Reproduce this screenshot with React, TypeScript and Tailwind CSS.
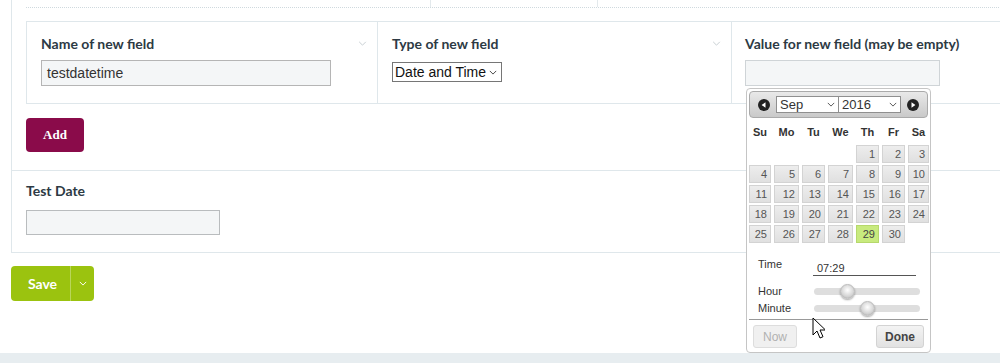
import React from 'react';

const weeks: (number | null)[][] = [
  [null, null, null, null, 1, 2, 3],
  [4, 5, 6, 7, 8, 9, 10],
  [11, 12, 13, 14, 15, 16, 17],
  [18, 19, 20, 21, 22, 23, 24],
  [25, 26, 27, 28, 29, 30, null],
];

const dayNames = ['Su', 'Mo', 'Tu', 'We', 'Th', 'Fr', 'Sa'];

const Chevron = ({ className }: { className?: string }) => (
  <svg viewBox="0 0 10 6" className={className} fill="none" stroke="currentColor" strokeWidth="1.2">
    <path d="M1 1l4 4 4-4" />
  </svg>
);

const NavIcon = ({ dir }: { dir: 'prev' | 'next' }) => (
  <svg viewBox="0 0 12 12" className="w-[12px] h-[12px]">
    <circle cx="6" cy="6" r="6" fill="#222" />
    {dir === 'prev' ? <path d="M7.5 3.2v5.6L3.6 6z" fill="#fff" /> : <path d="M4.5 3.2v5.6L8.4 6z" fill="#fff" />}
  </svg>
);

const Handle = () => (
  <div className="w-[15px] h-[15px] rounded-full border border-[#bbb] bg-[radial-gradient(circle_at_50%_40%,#ffffff,#d5d5d5_60%,#a9a9a9)] shadow-[0_1px_2px_rgba(0,0,0,0.35)]" />
);

const DatePicker = () => (
  <div className="absolute left-[746px] top-[88px] w-[185px] h-[265px] bg-white border border-[#c5c5c5] rounded-[4px] p-[1px] font-['Liberation_Sans',Arial,sans-serif] text-[#333]">
    {/* header */}
    <div className="h-[27px] mx-[1px] mt-[1px] rounded-[4px] border border-[#aaa] bg-[linear-gradient(#e9e9e9,#c9c9c9)] flex items-center px-[8px]">
      <NavIcon dir="prev" />
      <div className="ml-[6px] flex">
        <div className="w-[63px] h-[17px] bg-white border border-[#8f8f8f] flex items-center justify-between pl-[3px] pr-[3px] text-[13px] leading-none">
          <span>Sep</span>
          <Chevron className="w-[8px] h-[5px] text-[#555]" />
        </div>
        <div className="w-[62px] h-[17px] bg-white border border-[#8f8f8f] border-l-0 flex items-center justify-between pl-[3px] pr-[3px] text-[13px] leading-none">
          <span>2016</span>
          <Chevron className="w-[8px] h-[5px] text-[#555]" />
        </div>
      </div>
      <div className="ml-auto">
        <NavIcon dir="next" />
      </div>
    </div>

    {/* day names */}
    <div className="grid grid-cols-[22px_25px_23px_25px_23px_23px_21px] gap-x-[3px] px-[1px] mt-[6px] h-[16px] items-center">
      {dayNames.map((d) => (
        <div key={d} className="text-center text-[11px] font-bold">{d}</div>
      ))}
    </div>

    {/* days */}
    <div className="grid grid-cols-[22px_25px_23px_25px_23px_23px_21px] gap-x-[3px] gap-y-[2px] px-[1px] mt-[5px]">
      {weeks.flat().map((d, i) =>
        d === null ? (
          <div key={i} className="h-[18px]" />
        ) : (
          <div
            key={i}
            className={
              d === 29
                ? 'h-[18px] border border-[#b6d86c] bg-[#c8ea7e] text-right pr-[3px] text-[11px] leading-[16px] text-[#444]'
                : 'h-[18px] border border-[#d3d3d3] bg-[linear-gradient(#ededed,#e0e0e0)] text-right pr-[3px] text-[11px] leading-[16px] text-[#555]'
            }
          >
            {d}
          </div>
        )
      )}
    </div>

    {/* time */}
    <div className="mt-[14px] pl-[10px] text-[11px]">
      <div className="flex items-start h-[26px]">
        <span className="w-[55px] leading-[14px]">Time</span>
        <span className="w-[103px] border-b border-[#555] pl-[4px] leading-[18px] h-[19px] pt-[2px]">07:29</span>
      </div>
      <div className="flex items-center h-[17px]">
        <span className="w-[56px]">Hour</span>
        <div className="relative w-[106px] h-[7px] rounded-full bg-[#dedede]">
          <div className="absolute left-[26px] top-[-4px]"><Handle /></div>
        </div>
      </div>
      <div className="flex items-center h-[17px]">
        <span className="w-[56px]">Minute</span>
        <div className="relative w-[106px] h-[7px] rounded-full bg-[#dedede]">
          <div className="absolute left-[46px] top-[-4px]"><Handle /></div>
        </div>
      </div>
    </div>
    <div className="mt-[2px] mx-[1px] border-t border-[#999]" />
    <div className="flex justify-between px-[5px] mt-[5px]">
      <div className="w-[44px] h-[23px] rounded-[3px] border border-[#ddd] bg-[#f0f0f0] text-[#b0b0b0] text-[12px] flex items-center justify-center">Now</div>
      <div className="w-[48px] h-[23px] rounded-[3px] border border-[#d3d3d3] bg-[linear-gradient(#f3f3f3,#e2e2e2)] text-[#444] text-[12px] font-bold flex items-center justify-center">Done</div>
    </div>
  </div>
);

const Cursor = () => (
  <svg className="absolute left-[812px] top-[317px] w-[13px] h-[22px]" viewBox="0 0 13 22">
    <path d="M1 1v17l4-4 3 7 3-1.3-3-6.7h5.5z" fill="#fff" stroke="#000" strokeWidth="1" strokeLinejoin="round" />
  </svg>
);

export default function App() {
  const label = "font-['Lato','Open_Sans',sans-serif] font-bold text-[14px] text-[#2d3a44]";
  return (
    <div className="relative w-[1000px] h-[363px] overflow-hidden bg-white">
      <div className="ml-[11px] w-[1100px] border-l border-b border-[#dfe7eb]">
        <div className="px-[14px] pb-[18px] border-b border-[#dfe7eb]">
          {/* top remnant */}
          <div className="h-[8px] border-b border-dotted border-[#cfd9de] flex">
            <div className="w-[405px] border-r border-[#e3e9ec]" />
            <div className="w-[167px] border-r border-[#e3e9ec]" />
          </div>

          {/* new field table */}
          <div className="mt-[13px] h-[83px] border border-[#dfe7eb] flex">
            <div className="w-[351px] border-r border-[#dfe7eb] pl-[14px] pt-[11px] relative">
              <div className={label}>Name of new field</div>
              <Chevron className="absolute right-[10px] top-[19px] w-[9px] h-[5px] text-[#c8cfd3]" />
              <div className="mt-[6px] w-[290px] h-[26px] bg-[#f4f6f7] border border-[#b5b5b5] pl-[5px] flex items-center text-[14px] text-[#333] font-['Liberation_Sans',Arial,sans-serif]">
                testdatetime
              </div>
            </div>
            <div className="w-[354px] border-r border-[#dfe7eb] pl-[14px] pt-[11px] relative">
              <div className={label}>Type of new field</div>
              <Chevron className="absolute right-[10px] top-[19px] w-[9px] h-[5px] text-[#c8cfd3]" />
              <div className="mt-[8px] w-[110px] h-[20px] bg-white border border-[#767676] pl-[2px] pr-[4px] flex items-center justify-between text-[14px] text-[#111] font-['Liberation_Sans',Arial,sans-serif]">
                <span>Date and Time</span>
                <Chevron className="w-[8px] h-[5px] text-[#444]" />
              </div>
            </div>
            <div className="flex-1 pl-[13px] pt-[11px]">
              <div className={label}>Value for new field (may be empty)</div>
              <div className="mt-[6px] w-[195px] h-[26px] bg-[#f4f6f7] border border-[#cfd4d7]" />
            </div>
          </div>

          <button className="mt-[14px] w-[58px] h-[34px] rounded-[4px] bg-[#8a0b4a] text-white font-bold text-[13px] font-['Liberation_Serif','Times_New_Roman',serif]">
            Add
          </button>
        </div>

        <div className="px-[14px] pt-[9px] pb-[17px]">
          <div className={label}>Test Date</div>
          <div className="mt-[9px] w-[194px] h-[25px] bg-[#f4f6f7] border border-[#b9bcbe]" />
        </div>
      </div>

      {/* save */}
      <div className="ml-[11px] mt-[13px] w-[83px] h-[35px] rounded-[4px] bg-[#9bc30f] flex items-stretch">
        <div className="w-[59px] flex items-center justify-center text-white font-bold text-[14px] font-['Lato','Open_Sans',sans-serif] pl-[4px]">
          Save
        </div>
        <div className="w-[1px] bg-[#b9d65a]" />
        <div className="flex-1 flex items-center justify-center">
          <Chevron className="w-[8px] h-[5px] text-white" />
        </div>
      </div>

      <div className="absolute left-0 right-0 top-[353px] h-[10px] bg-[#e7edf0]" />

      <DatePicker />
      <Cursor />
    </div>
  );
}
